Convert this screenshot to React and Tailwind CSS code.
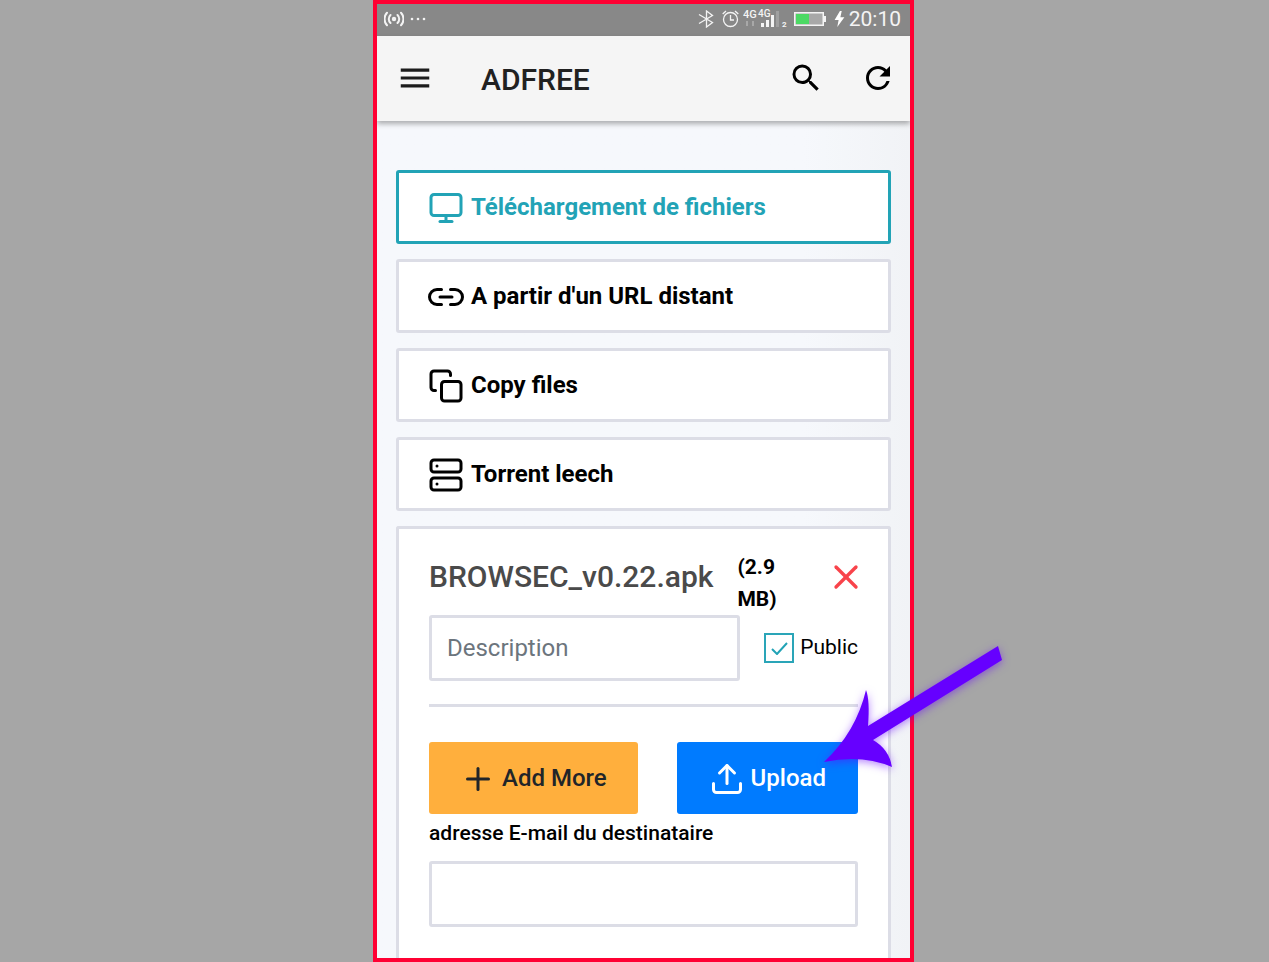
import React, { useState } from "react";
import { FiMonitor, FiLink2, FiCopy, FiServer, FiX, FiPlus, FiUpload } from "react-icons/fi";
import { MdMenu, MdSearch, MdRefresh } from "react-icons/md";

const sources = [
  { id: "files", label: "Téléchargement de fichiers", icon: FiMonitor },
  { id: "url", label: "A partir d'un URL distant", icon: FiLink2 },
  { id: "copy", label: "Copy files", icon: FiCopy },
  { id: "torrent", label: "Torrent leech", icon: FiServer },
];

function StatusBar() {
  return (
    <div className="flex h-8 items-center bg-[#888888] px-[7px] pr-[9px] pb-[3px] text-[#f4f4f4]">
      <svg width="20" height="16" viewBox="0 0 20 16" fill="none" stroke="currentColor" strokeWidth="2" strokeLinecap="round">
        <circle cx="10" cy="8" r="2.2" fill="currentColor" stroke="none" />
        <path d="M6.5 4a5.5 5.5 0 0 0 0 8M13.5 4a5.5 5.5 0 0 1 0 8M3 1.800a9 9 0 0 0 0 12.400M17 1.800a9 9 0 0 1 0 12.400" />
      </svg>
      <svg className="ml-1.5" width="16" height="4" viewBox="0 0 16 4" fill="currentColor">
        <circle cx="2" cy="2" r="1.3" />
        <circle cx="8" cy="2" r="1.3" />
        <circle cx="14" cy="2" r="1.3" />
      </svg>

      <svg className="ml-auto" width="16" height="18" viewBox="0 0 16 18" fill="none" stroke="currentColor" strokeWidth="1.3">
        <path d="M1 4.5 14.5 12.5 8.500 17V1L14.5 5.5 1 13.5" />
      </svg>
      <svg className="ml-2" width="17" height="18" viewBox="0 0 17 18" fill="none" stroke="currentColor" strokeWidth="1.3">
        <circle cx="8.5" cy="9.5" r="7" />
        <path d="M8.5 5v5H12M.7 4 4 1M16.3 4 13 1" />
      </svg>
      <svg className="ml-1" width="45" height="20" viewBox="0 0 45 20" fill="currentColor">
        <text x="0" y="9" fontSize="11" fontWeight="500">4G</text>
        <text x="15" y="8" fontSize="10" fontWeight="500">4G</text>
        <path d="M4 12v5M10 12v5" stroke="#a8a8a8" strokeWidth="2" />
        <path d="M18 14h3v4h-3zM23 11h3v7h-3zM28 6h3v12h-3z" />
        <path d="M33 2h3v16h-3z" fill="#a0a0a0" />
        <text x="39" y="18" fontSize="8" fontWeight="700">2</text>
      </svg>
      <svg className="ml-1.5" width="32" height="14" viewBox="0 0 32 14">
        <rect x=".75" y=".75" width="28.5" height="12.5" fill="#a8a8a8" stroke="#f4f4f4" strokeWidth="1.5" />
        <rect x="2" y="2" width="13" height="10" fill="#4cd964" />
        <path d="M30 4h2v6h-2z" fill="#f4f4f4" />
      </svg>
      <svg className="ml-2" width="11" height="16" viewBox="0 0 11 18" fill="#ffffff">
        <path d="M6 0 0 10h4.500L3 18l8-11H6.500L8 0z" />
      </svg>
      <span className="ml-1 text-[21px] leading-7">20:10</span>
    </div>
  );
}

function AppBar() {
  return (
    <header className="flex h-[85px] items-center bg-[#f5f5f5] pl-[19px] pr-[14px] pb-px shadow-[0_3px_5px_rgba(0,0,0,0.3)]">
      <button aria-label="Menu" className="text-[#1c1c1c]">
        <MdMenu size={38} />
      </button>
      <h1 className="ml-[47px] flex-1 pt-0.5 text-[30px] font-medium text-[#212121]">ADFREE</h1>
      <button aria-label="Search" className="text-black">
        <MdSearch size={36} />
      </button>
      <button aria-label="Refresh" className="ml-9 text-black">
        <MdRefresh size={36} />
      </button>
    </header>
  );
}

function Arrow() {
  return (
    <svg
      className="pointer-events-none absolute -top-[102px] left-[143px] max-w-none drop-shadow-[0_2px_4px_rgba(102,0,255,0.5)]"
      width="190"
      height="135"
      viewBox="0 0 190 135"
      fill="#6600ff"
    >
      <path d="M4 122Q36 92 46 50Q50 60 48 86L178 6L182 20L53 100Q69 109 72 127Q42 114 4 122Z" />
    </svg>
  );
}

export default function App() {
  const [source, setSource] = useState("files");
  const [isPublic, setIsPublic] = useState(true);

  return (
    <div className="flex min-h-screen justify-center bg-[#a6a6a6] pl-[18px] font-['Roboto',sans-serif] text-black">
      <div className="flex w-full max-w-[541px] flex-col border-4 border-[#ff0033] bg-[#f6f8fb]">
        {/* the bars stay above the page so the header shadow falls on it */}
        <div className="z-10 overflow-x-clip">
          <StatusBar />
          <AppBar />
        </div>

        <main className="flex flex-1 flex-col gap-[15px] bg-linear-to-r from-[#f6f8fc] from-80% to-[#f1f3f6] px-[19px] pt-[49px]">
          {sources.map(({ id, label, icon: Icon }) => (
            <button
              key={id}
              onClick={() => setSource(id)}
              className={`flex h-[74px] items-center gap-[7px] rounded-[3px] border-[3px] bg-white px-[29px] text-2xl font-bold ${
                source === id ? "border-[#22a3b6] text-[#22a3b6]" : "border-[#dcdde6] text-black"
              }`}
            >
              <Icon size={36} className="mt-0.5" />
              {label}
            </button>
          ))}

          <section className="flex-1 rounded-t-[3px] border-[3px] border-b-0 border-[#dcdde6] bg-white px-[30px] pt-[22px] pb-[31px]">
            <div className="flex items-start">
              <h2 className="text-[30px] leading-[52px] font-medium text-[#4a4a4a]">BROWSEC_v0.22.apk</h2>
              <p className="ml-6 w-14 text-[21px] leading-8 font-bold">(2.9 MB)</p>
              <button aria-label="Remove" className="-mr-2 ml-auto flex h-[52px] items-center text-[#f8434a]">
                <FiX size={40} />
              </button>
            </div>

            <div className="flex items-center gap-6">
              <input
                type="text"
                aria-label="Description"
                placeholder="Description"
                className="h-[66px] min-w-0 flex-1 rounded-[3px] border-[3px] border-[#dcdde6] px-[15px] text-2xl placeholder:text-[#6c757d]"
              />
              <label className="flex items-center gap-1.5 text-[21px]">
                <span className="grid place-items-center">
                  <input
                    type="checkbox"
                    checked={isPublic}
                    onChange={(e) => setIsPublic(e.target.checked)}
                    className="col-start-1 row-start-1 size-[30px] appearance-none border-2 border-[#2aa5b8] bg-white"
                  />
                  {isPublic && (
                    <svg className="pointer-events-none col-start-1 row-start-1" width="17" height="13" viewBox="0 0 17 13" fill="none" stroke="#22a3b6" strokeWidth="2">
                      <path d="m1 7 5 5L16 1" />
                    </svg>
                  )}
                </span>
                Public
              </label>
            </div>

            <hr className="mt-[23px] border-t-[3px] border-[#dcdde6]" />

            <div className="mt-[35px] flex justify-between">
              <button className="flex h-[72px] items-center gap-1.5 rounded-[3px] bg-[#ffaf3d] px-[31px] text-2xl font-medium text-[#212529]">
                <FiPlus size={36} className="mt-0.5" />
                Add More
              </button>
              <div className="relative">
                <button className="flex h-[72px] items-center gap-1.5 rounded-[3px] bg-[#007bff] px-8 text-2xl font-medium text-white">
                  <FiUpload size={36} className="mt-0.5" />
                  Upload
                </button>
                <Arrow />
              </div>
            </div>

            <label htmlFor="recipient" className="block text-[21px] leading-[38px] font-medium">
              adresse E-mail du destinataire
            </label>
            <input
              id="recipient"
              type="email"
              className="mt-[9px] h-[66px] w-full rounded-[3px] border-[3px] border-[#dcdde6] px-[15px] text-2xl"
            />
          </section>
        </main>
      </div>
    </div>
  );
}
